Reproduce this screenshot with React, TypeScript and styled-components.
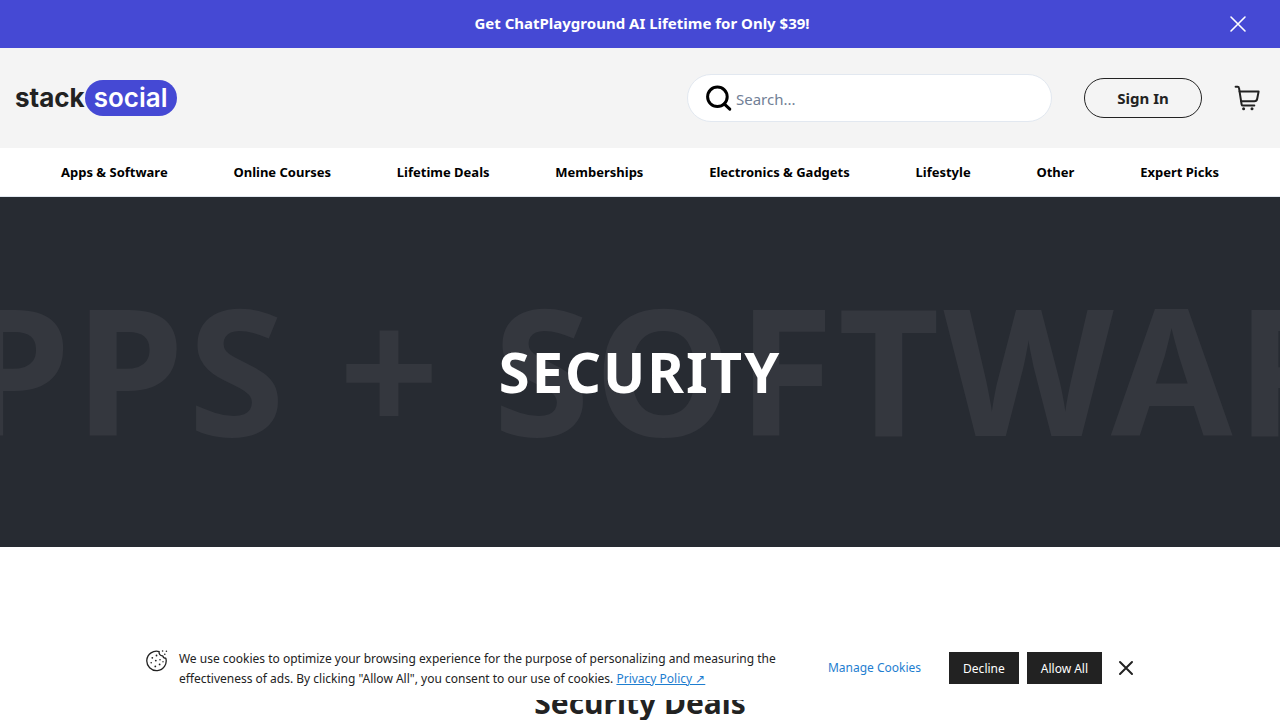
import React from "react";
import styled, { createGlobalStyle } from "styled-components";

const GlobalStyle = createGlobalStyle`
  *, *::before, *::after { box-sizing: border-box; }
  body {
    margin: 0;
    background: #fff;
    color: #222;
    font-family: "Noto Sans", sans-serif;
    font-size: 16px;
    overflow-x: hidden;
  }
  button, input { font-family: inherit; }
  h1, h2, p { margin: 0; }
`;

const Promo = styled.div`
  display: flex;
  align-items: center;
  height: 48px;
  padding: 0 32px;
  background: #4549d4;
`;

const PromoLink = styled.a`
  flex: 1;
  padding: 0 0 2px 24px;
  color: #fff;
  font-size: 15px;
  font-weight: 700;
  line-height: 24px;
  text-align: center;
  text-decoration: none;
`;

const IconButton = styled.button`
  display: flex;
  flex: none;
  padding: 0;
  border: 0;
  background: none;
  color: inherit;
  cursor: pointer;
`;

const PromoClose = styled(IconButton)`
  color: #fff;
`;

const Header = styled.header`
  display: flex;
  align-items: center;
  gap: 32px;
  height: 100px;
  padding: 0 20px 0 15px;
  background: #f4f4f4;
`;

const Logo = styled.a`
  display: flex;
  align-items: center;
  margin-right: auto;
  color: #222;
  font-family: Inter, sans-serif;
  font-size: 26px;
  font-weight: 700;
  line-height: 36px;
  text-decoration: none;
`;

const LogoPill = styled.span`
  height: 36px;
  padding: 0 9px;
  border-radius: 18px;
  background: #4549d4;
  color: #fff;
  font-weight: 600;
`;

const SearchBox = styled.label`
  display: flex;
  align-items: center;
  gap: 4px;
  flex: 0 1 365px;
  height: 48px;
  padding: 0 16px;
  border: 1px solid #e2e8f0;
  border-radius: 24px;
  background: #fff;
  color: #000;
`;

const SearchInput = styled.input`
  flex: 1;
  min-width: 0;
  padding: 2px 0 0;
  border: 0;
  outline: 0;
  background: none;
  color: #222;
  font-size: 15px;
  line-height: 24px;

  &::placeholder {
    color: #718096;
    opacity: 1;
  }
`;

const SignIn = styled.button`
  width: 118px;
  height: 40px;
  padding: 0;
  border: 1px solid #222;
  border-radius: 20px;
  background: none;
  color: #222;
  font-size: 15px;
  font-weight: 700;
  cursor: pointer;
`;

const Nav = styled.nav`
  display: flex;
  justify-content: space-between;
  height: 49px;
  padding: 0 61px;
  border-bottom: 1px solid #e2e8f0;
  background: #fff;
`;

const NavLink = styled.a`
  color: #000;
  font-size: 13px;
  font-weight: 700;
  line-height: 48px;
  white-space: nowrap;
  text-decoration: none;
`;

const Hero = styled.section`
  position: relative;
  display: flex;
  align-items: center;
  justify-content: center;
  height: 350px;
  padding-bottom: 2px;
  overflow: hidden;
  background: #272b32;
`;

const HeroGhost = styled.span`
  position: absolute;
  inset: 0;
  display: flex;
  align-items: center;
  justify-content: center;
  padding: 0 0 8px 14px;
  color: #34373e;
  font-size: 176px;
  font-weight: 700;
  letter-spacing: 4px;
  white-space: nowrap;
`;

const HeroTitle = styled.h1`
  position: relative;
  color: #fff;
  font-size: 56px;
  font-weight: 700;
  letter-spacing: 2px;
  line-height: 80px;
`;

const Deals = styled.section`
  padding: 132px 16px 64px;
`;

const DealsTitle = styled.h2`
  font-size: 30px;
  font-weight: 700;
  line-height: 48px;
  text-align: center;
`;

const CookieBar = styled.aside`
  position: fixed;
  right: 0;
  bottom: 20px;
  left: 0;
  display: flex;
  align-items: center;
  justify-content: center;
  padding: 11px 0;
  background: #fff;
`;

const CookieMessage = styled.div`
  display: flex;
  gap: 11px;
  width: 642px;
  padding-top: 2px;
`;

const CookieGlyph = styled.span`
  flex: none;
  line-height: 0;
  padding-top: 1px;
`;

const CookieText = styled.p`
  font-size: 12px;
  line-height: 20px;
`;

const CookieLink = styled.a`
  color: #1e7ed0;
`;

const CookieActions = styled.div`
  display: flex;
  align-items: center;
  gap: 8px;
  margin-left: 40px;
`;

const ManageButton = styled.button`
  margin-right: 20px;
  padding: 0;
  border: 0;
  background: none;
  color: #1e7ed0;
  font-size: 12px;
  line-height: 20px;
  cursor: pointer;
`;

const CookieButton = styled.button`
  height: 32px;
  padding: 0 14px;
  border: 0;
  background: #222;
  color: #fff;
  font-size: 12px;
  cursor: pointer;
`;

const CookieClose = styled(IconButton)`
  margin-left: 8px;
`;

const categories = [
  "Apps & Software",
  "Online Courses",
  "Lifetime Deals",
  "Memberships",
  "Electronics & Gadgets",
  "Lifestyle",
  "Other",
  "Expert Picks",
];

const Cross = ({ size, inset, stroke }: { size: number; inset: number; stroke: number }) => (
  <svg width={size} height={size} viewBox={`0 0 ${size} ${size}`} fill="none" stroke="currentColor" strokeWidth={stroke} aria-hidden="true">
    <path d={`M${inset} ${inset}L${size - inset} ${size - inset}M${size - inset} ${inset}L${inset} ${size - inset}`} strokeLinecap="round" />
  </svg>
);

const SearchIcon = () => (
  <svg width="28" height="28" viewBox="0 0 28 28" fill="none" stroke="currentColor" strokeWidth="3" strokeLinecap="round" aria-hidden="true">
    <circle cx="13.4" cy="12.8" r="9.8" />
    <path d="M20.2 19.8l5.6 5.4" />
  </svg>
);

const CartIcon = () => (
  <svg width="26" height="26" viewBox="0 0 26 26" fill="none" stroke="#222" strokeWidth="2" strokeLinecap="round" strokeLinejoin="round" aria-hidden="true">
    <path d="M1.6 1.7h2c.8 0 1.3.4 1.4 1.2l2.6 16.4c.1.9.6 1.3 1.4 1.3h11.3" />
    <path d="M5.6 6.6h19l-1.4 7.2c-.3 1.7-1.2 2.4-2.8 2.4H7.2" />
    <circle cx="9.6" cy="23.8" r="1.5" fill="#222" stroke="none" />
    <circle cx="18" cy="23.8" r="1.5" fill="#222" stroke="none" />
  </svg>
);

const CookieIcon = () => (
  <svg width="22" height="22" viewBox="0 0 22 22" fill="none" stroke="#222" strokeWidth="1.3" strokeLinecap="round" strokeLinejoin="round" aria-hidden="true">
    <path d="M13.2 1.6a9.7 9.7 0 1 0 6.6 6.6 3 3 0 0 1-3-2.4 3.3 3.3 0 0 1-3.6-4.2z" />
    <g fill="#222" stroke="none">
      <circle cx="10.5" cy="5.5" r=".9" />
      <circle cx="6.3" cy="7.8" r=".9" />
      <circle cx="14" cy="9.8" r=".8" />
      <circle cx="9.8" cy="10.6" r=".9" />
      <circle cx="5.2" cy="12.8" r=".8" />
      <circle cx="13.6" cy="14.4" r=".9" />
      <circle cx="9.3" cy="16.4" r=".9" />
      <circle cx="17" cy="11.8" r=".7" />
      <circle cx="16.6" cy="1" r=".8" />
      <circle cx="20.4" cy="1.2" r=".8" />
      <circle cx="18.8" cy="4.2" r=".8" />
    </g>
  </svg>
);

export default function App() {
  return (
    <>
      <GlobalStyle />
      <Promo>
        <PromoLink href="#">Get ChatPlayground AI Lifetime for Only $39!</PromoLink>
        <PromoClose type="button" aria-label="Dismiss promotion">
          <Cross size={20} inset={3} stroke={1.6} />
        </PromoClose>
      </Promo>
      <Header>
        <Logo href="#">
          stack<LogoPill>social</LogoPill>
        </Logo>
        <SearchBox>
          <SearchIcon />
          <SearchInput type="text" placeholder="Search..." aria-label="Search" />
        </SearchBox>
        <SignIn type="button">Sign In</SignIn>
        <IconButton type="button" aria-label="Cart">
          <CartIcon />
        </IconButton>
      </Header>
      <Nav>
        {categories.map((name) => (
          <NavLink key={name} href="#">{name}</NavLink>
        ))}
      </Nav>
      <main>
        <Hero>
          <HeroGhost aria-hidden="true">APPS + SOFTWARE</HeroGhost>
          <HeroTitle>SECURITY</HeroTitle>
        </Hero>
        <Deals>
          <DealsTitle>Security Deals</DealsTitle>
        </Deals>
      </main>
      <CookieBar aria-label="Cookie consent">
        <CookieMessage>
          <CookieGlyph>
            <CookieIcon />
          </CookieGlyph>
          <CookieText>
            We use cookies to optimize your browsing experience for the purpose of personalizing and measuring the
            effectiveness of ads. By clicking "Allow All", you consent to our use of cookies.{" "}
            <CookieLink href="#">Privacy Policy ↗</CookieLink>
          </CookieText>
        </CookieMessage>
        <CookieActions>
          <ManageButton type="button">Manage Cookies</ManageButton>
          <CookieButton type="button">Decline</CookieButton>
          <CookieButton type="button">Allow All</CookieButton>
          <CookieClose type="button" aria-label="Close">
            <Cross size={16} inset={2} stroke={2} />
          </CookieClose>
        </CookieActions>
      </CookieBar>
    </>
  );
}
